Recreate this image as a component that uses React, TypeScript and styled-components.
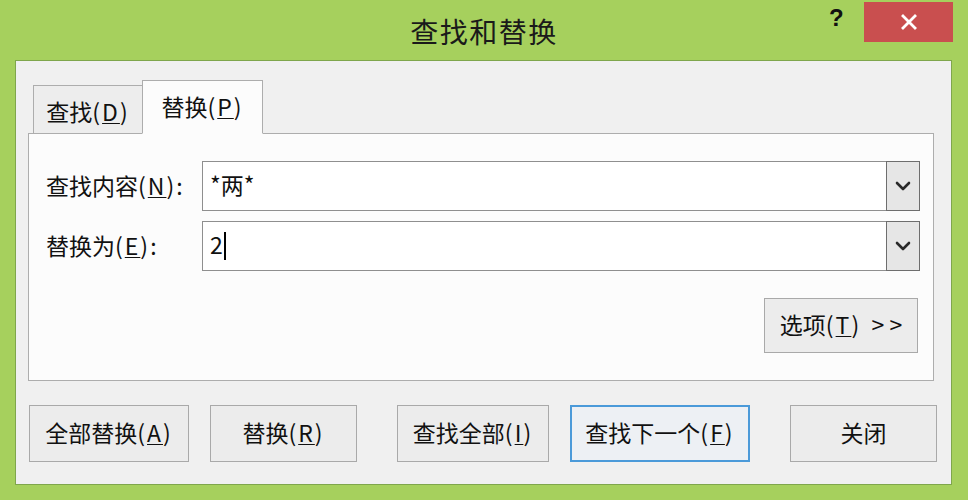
import React from "react";
import styled, { createGlobalStyle } from "styled-components";

const Global = createGlobalStyle`
  html, body { margin: 0; padding: 0; }
  body { width: 968px; height: 500px; overflow: hidden; background: #a5cf5c; }
  * { box-sizing: border-box; }
`;

const FONT = `"Noto Sans CJK SC", "Noto Sans", "Liberation Sans", sans-serif`;

const Window = styled.div`
  width: 968px;
  height: 500px;
  background: #a6d05d;
  display: flex;
  flex-direction: column;
  font-family: ${FONT};
  color: #111;
`;

const TitleBar = styled.div`
  height: 60px;
  position: relative;
  display: flex;
  align-items: center;
  justify-content: center;
`;

const Title = styled.div`
  font-size: 28px;
  letter-spacing: 1.5px;
  color: #1a1a1a;
  margin-top: 2px;
  margin-left: 0px;
`;

const Help = styled.div`
  position: absolute;
  left: 829px;
  top: 4px;
  font-family: "Liberation Sans", sans-serif;
  font-weight: 700;
  font-size: 24px;
  color: #111;
`;

const Close = styled.div`
  position: absolute;
  left: 864px;
  top: 2px;
  width: 89px;
  height: 40px;
  background: #c94f4f;
  display: flex;
  align-items: center;
  justify-content: center;
`;

const Body = styled.div`
  margin: 0 16px 15px 15px;
  flex: 1;
  background: #f0f0f0;
  border: 1px solid #7fa64c;
  padding: 19px 17px 0 12px;
  display: flex;
  flex-direction: column;
`;

const Tabs = styled.div`
  display: flex;
  align-items: flex-end;
  margin-left: 5px;
  height: 54px;
  position: relative;
  z-index: 1;
  margin-bottom: -1px;
`;

const Tab = styled.div<{ $active?: boolean; $w: number }>`
  width: ${(p) => p.$w}px;
  height: ${(p) => (p.$active ? 54 : 49)}px;
  display: flex;
  align-items: center;
  justify-content: center;
  font-size: 23px;
  background: ${(p) => (p.$active ? "#fcfcfc" : "#ededed")};
  border: 1px solid #adadad;
  border-bottom: ${(p) => (p.$active ? "1px solid #fcfcfc" : "1px solid #adadad")};
  margin-left: ${(p) => (p.$active ? "-1px" : "0")};
  padding-top: ${(p) => (p.$active ? 0 : 2)}px;
  padding-bottom: ${(p) => (p.$active ? 3 : 0)}px;
`;

const U = styled.span`
  text-decoration: underline;
  text-underline-offset: 2px;
  text-decoration-thickness: 1px;
`;

const Paren = styled.span`
  letter-spacing: 2px;
`;

const Panel = styled.div`
  width: 906px;
  height: 248px;
  background: #fcfcfc;
  border: 1px solid #adadad;
  padding: 27px 13px 0 17px;
  display: flex;
  flex-direction: column;
`;

const Row = styled.div`
  display: flex;
  align-items: center;
  height: 50px;
  margin-bottom: 10px;
`;

const Label = styled.div`
  width: 156px;
  font-size: 23px;
  padding-bottom: 3px;
  white-space: nowrap;
`;

const Combo = styled.div`
  flex: 1;
  height: 50px;
  display: flex;
  background: #fff;
  border: 1px solid #8f8f8f;
  border-right: none;
`;

const Value = styled.div`
  flex: 1;
  display: flex;
  align-items: center;
  padding-left: 7px;
  padding-bottom: 4px;
  font-size: 23px;
`;

const Caret = styled.span`
  display: inline-block;
  width: 2px;
  height: 28px;
  background: #000;
  margin-left: 1px;
  margin-top: 4px;
`;

const Drop = styled.div`
  width: 34px;
  height: 50px;
  margin-top: -1px;
  background: #e6e6e6;
  border: 1px solid #6e6e6e;
  display: flex;
  align-items: center;
  justify-content: center;
`;

const OptionsRow = styled.div`
  display: flex;
  justify-content: flex-end;
  margin-top: 17px;
  padding-right: 2px;
`;

const Button = styled.div<{ $w: number; $primary?: boolean }>`
  width: ${(p) => p.$w}px;
  height: 57px;
  background: ${(p) => (p.$primary ? "#edf0f4" : "#ececec")};
  border: ${(p) => (p.$primary ? "2px solid #4b9ad9" : "1px solid #a9a9a9")};
  display: flex;
  align-items: center;
  justify-content: center;
  font-size: 23px;
  padding-bottom: 3px;
  flex-shrink: 0;
  white-space: pre;
`;

const OptionsButton = styled(Button)`
  height: 55px;
`;

const Footer = styled.div`
  display: flex;
  margin-top: 24px;
  margin-left: 1px;
`;

const Gap = styled.div<{ $w: number }>`
  width: ${(p) => p.$w}px;
  flex-shrink: 0;
`;

const Chevron = () => (
  <svg width="16" height="10" viewBox="0 0 16 10">
    <path d="M2 2 L8 8 L14 2" fill="none" stroke="#2a2a2a" strokeWidth="2.6" strokeLinecap="round" strokeLinejoin="round" />
  </svg>
);

const CloseX = () => (
  <svg width="16" height="16" viewBox="0 0 16 16">
    <path d="M2 2 L14 14 M14 2 L2 14" stroke="#fff" strokeWidth="2.8" strokeLinecap="square" />
  </svg>
);

const Key = ({ k }: { k: string }) => (
  <Paren>
    (<U>{k}</U>)
  </Paren>
);

export default function App() {
  return (
    <>
      <Global />
      <Window>
        <TitleBar>
          <Title>查找和替换</Title>
          <Help>?</Help>
          <Close>
            <CloseX />
          </Close>
        </TitleBar>
        <Body>
          <Tabs>
            <Tab $w={110}>
              查找<Key k="D" />
            </Tab>
            <Tab $w={121} $active>
              替换<Key k="P" />
            </Tab>
          </Tabs>
          <Panel>
            <Row>
              <Label>
                查找内容<Key k="N" />:
              </Label>
              <Combo>
                <Value>*两*</Value>
                <Drop>
                  <Chevron />
                </Drop>
              </Combo>
            </Row>
            <Row>
              <Label>
                替换为<Key k="E" />:
              </Label>
              <Combo>
                <Value>
                  2<Caret />
                </Value>
                <Drop>
                  <Chevron />
                </Drop>
              </Combo>
            </Row>
            <OptionsRow>
              <OptionsButton $w={154}>
                选项<Key k="T" />{"  > >"}
              </OptionsButton>
            </OptionsRow>
          </Panel>
          <Footer>
            <Button $w={160}>
              全部替换<Key k="A" />
            </Button>
            <Gap $w={21} />
            <Button $w={147}>
              替换<Key k="R" />
            </Button>
            <Gap $w={40} />
            <Button $w={152}>
              查找全部<Key k="I" />
            </Button>
            <Gap $w={21} />
            <Button $w={180} $primary>
              查找下一个<Key k="F" />
            </Button>
            <Gap $w={40} />
            <Button $w={147}>关闭</Button>
          </Footer>
        </Body>
      </Window>
    </>
  );
}
